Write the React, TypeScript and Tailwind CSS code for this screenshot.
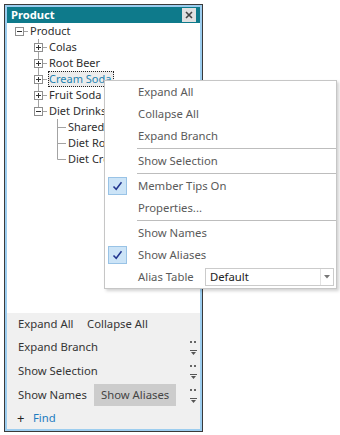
import React from 'react';

type Cell = 'none' | 'rootMinus' | 'teePlus' | 'elbowMinus' | 'tee' | 'elbow';

type Row = { label: string; cells: Cell[]; selected?: boolean };

const rows: Row[] = [
  { label: 'Product', cells: ['rootMinus'] },
  { label: 'Colas', cells: ['none', 'teePlus'] },
  { label: 'Root Beer', cells: ['none', 'teePlus'] },
  { label: 'Cream Soda', cells: ['none', 'teePlus'], selected: true },
  { label: 'Fruit Soda', cells: ['none', 'teePlus'] },
  { label: 'Diet Drinks', cells: ['none', 'elbowMinus'] },
  { label: 'Shared Diet Cola', cells: ['none', 'none', 'tee'] },
  { label: 'Diet Root Beer', cells: ['none', 'none', 'tee'] },
  { label: 'Diet Cream', cells: ['none', 'none', 'elbow'] },
];

const TreeCell = ({ kind }: { kind: Cell }) => {
  const line = '#a3a3a3';
  const hasBox = kind === 'rootMinus' || kind === 'teePlus' || kind === 'elbowMinus';
  return (
    <svg width="19" height="16" className="shrink-0">
      {(kind === 'teePlus' || kind === 'tee') && <line x1="9.5" y1="0" x2="9.5" y2="16" stroke={line} />}
      {(kind === 'elbowMinus' || kind === 'elbow') && <line x1="9.5" y1="0" x2="9.5" y2="8.5" stroke={line} />}
      {kind !== 'none' && <line x1="9.5" y1="8.5" x2="18" y2="8.5" stroke={line} />}
      {hasBox && (
        <>
          <rect x="5.5" y="4.5" width="8" height="8" fill="white" stroke="#8e8e8e" />
          <line x1="7" y1="8.5" x2="12" y2="8.5" stroke="#333" />
          {kind === 'teePlus' && <line x1="9.5" y1="6" x2="9.5" y2="11" stroke="#333" />}
        </>
      )}
    </svg>
  );
};

const Check = () => (
  <div className="w-[19px] h-[18px] bg-[#cce4f7] border border-[#99c3e6] flex items-center justify-center">
    <svg width="11" height="10" viewBox="0 0 11 10">
      <path d="M1.5 5.5 L4.2 8.3 L9.5 1.2" fill="none" stroke="#22368f" strokeWidth="1.5" />
    </svg>
  </div>
);

const MenuItem = ({ label, checked }: { label: string; checked?: boolean }) => (
  <div className="h-[22px] shrink-0 flex items-center relative">
    {checked && (
      <div className="absolute left-[3px] top-[2px]">
        <Check />
      </div>
    )}
    <span className="pl-[33px] text-[11.3px] text-[#5a5a5a]">{label}</span>
  </div>
);

const Sep = () => (
  <div className="h-[3px] shrink-0 flex items-center">
    <div className="h-px w-full ml-[32px] bg-[#bdbdbd]" />
  </div>
);

const Gripper = () => (
  <svg width="7" height="16" className="ml-auto mr-[3px] shrink-0">
    <rect x="0" y="2" width="2" height="2" fill="#666" />
    <rect x="4" y="2" width="2" height="2" fill="#666" />
    <rect x="0" y="11" width="7" height="1" fill="#555" />
    <path d="M1 13 L6 13 L3.5 16 Z" fill="#555" />
  </svg>
);

export default function App() {
  return (
    <div className="w-[340px] h-[435px] bg-white relative font-['Noto_Sans',sans-serif] overflow-hidden">
      <div className="pl-[4px] pt-[4px]">
        <div className="w-[199px] h-[428px] border border-[#3a3a3a]">
          <div className="h-full border-2 border-[#9ccdef] flex flex-col">
            {/* header */}
            <div className="h-[16px] shrink-0 bg-[#0e7a8b] flex items-center">
              <span className="pl-[4px] text-[11.2px] font-bold text-white leading-none">Product</span>
              <div className="ml-auto mr-[4px] w-[14px] h-[14px] bg-[#e0e0e0] flex items-center justify-center">
                <svg width="8" height="8" viewBox="0 0 8 8">
                  <path d="M1 1 L7 7 M7 1 L1 7" stroke="#444" strokeWidth="1.6" />
                </svg>
              </div>
            </div>

            {/* tree */}
            <div className="flex-1 bg-white overflow-hidden pl-[3px]">
              {rows.map((r) => (
                <div key={r.label} className="h-4 flex items-center">
                  {r.cells.map((c, i) => (
                    <TreeCell key={i} kind={c} />
                  ))}
                  <span
                    className={`h-4 flex items-center whitespace-nowrap text-[11px] border pr-[2px] ${
                      r.selected
                        ? 'border-dotted border-[#222] bg-[#ececec] text-[#1c82b0]'
                        : 'border-transparent text-[#2e2e2e]'
                    }`}
                  >
                    {r.label}
                  </span>
                </div>
              ))}
            </div>

            {/* bottom toolstrips */}
            <div className="h-[116px] shrink-0 bg-[#f0f0f0] flex flex-col text-[11.3px] text-[#353535]">
              <div className="h-[22px] flex items-center pl-[11px]">
                <span className="w-[69px]">Expand All</span>
                <span>Collapse All</span>
              </div>
              <div className="h-6 flex items-center pl-[11px]">
                <span>Expand Branch</span>
                <Gripper />
              </div>
              <div className="h-6 flex items-center pl-[11px]">
                <span>Show Selection</span>
                <Gripper />
              </div>
              <div className="h-6 flex items-center pl-[11px]">
                <span className="w-[76px]">Show Names</span>
                <span className="h-[22px] flex items-center px-[7px] bg-[#cccccc] text-[#444]">Show Aliases</span>
                <Gripper />
              </div>
              <div className="h-[22px] flex items-center pl-[10px]">
                <span className="w-[16px] text-[13px] text-[#222] leading-none">+</span>
                <span className="text-[#1d7cc0]">Find</span>
              </div>
            </div>
          </div>
        </div>
      </div>

      {/* context menu */}
      <div className="absolute left-[104px] top-[80px] w-[233px] h-[209px] bg-white border border-[#c6c6c6] shadow-[2px_2px_3px_rgba(0,0,0,0.18)] flex flex-col">
        <MenuItem label="Expand All" />
        <MenuItem label="Collapse All" />
        <MenuItem label="Expand Branch" />
        <Sep />
        <MenuItem label="Show Selection" />
        <Sep />
        <MenuItem label="Member Tips On" checked />
        <MenuItem label="Properties..." />
        <Sep />
        <MenuItem label="Show Names" />
        <MenuItem label="Show Aliases" checked />
        <div className="h-[22px] shrink-0 flex items-center">
          <span className="pl-[33px] w-[99px] text-[11.3px] text-[#5a5a5a]">Alias Table</span>
          <div className="h-[18px] w-[129px] ml-auto mr-[2px] border border-[#cbcbcb] flex items-center">
            <span className="pl-[4px] text-[11.3px] text-[#222] flex-1">Default</span>
            <div className="w-[13px] h-full border-l border-[#e2e2e2] flex items-center justify-center">
              <svg width="6" height="4" viewBox="0 0 6 4">
                <path d="M0 0 L6 0 L3 3.5 Z" fill="#777" />
              </svg>
            </div>
          </div>
        </div>
      </div>
    </div>
  );
}
